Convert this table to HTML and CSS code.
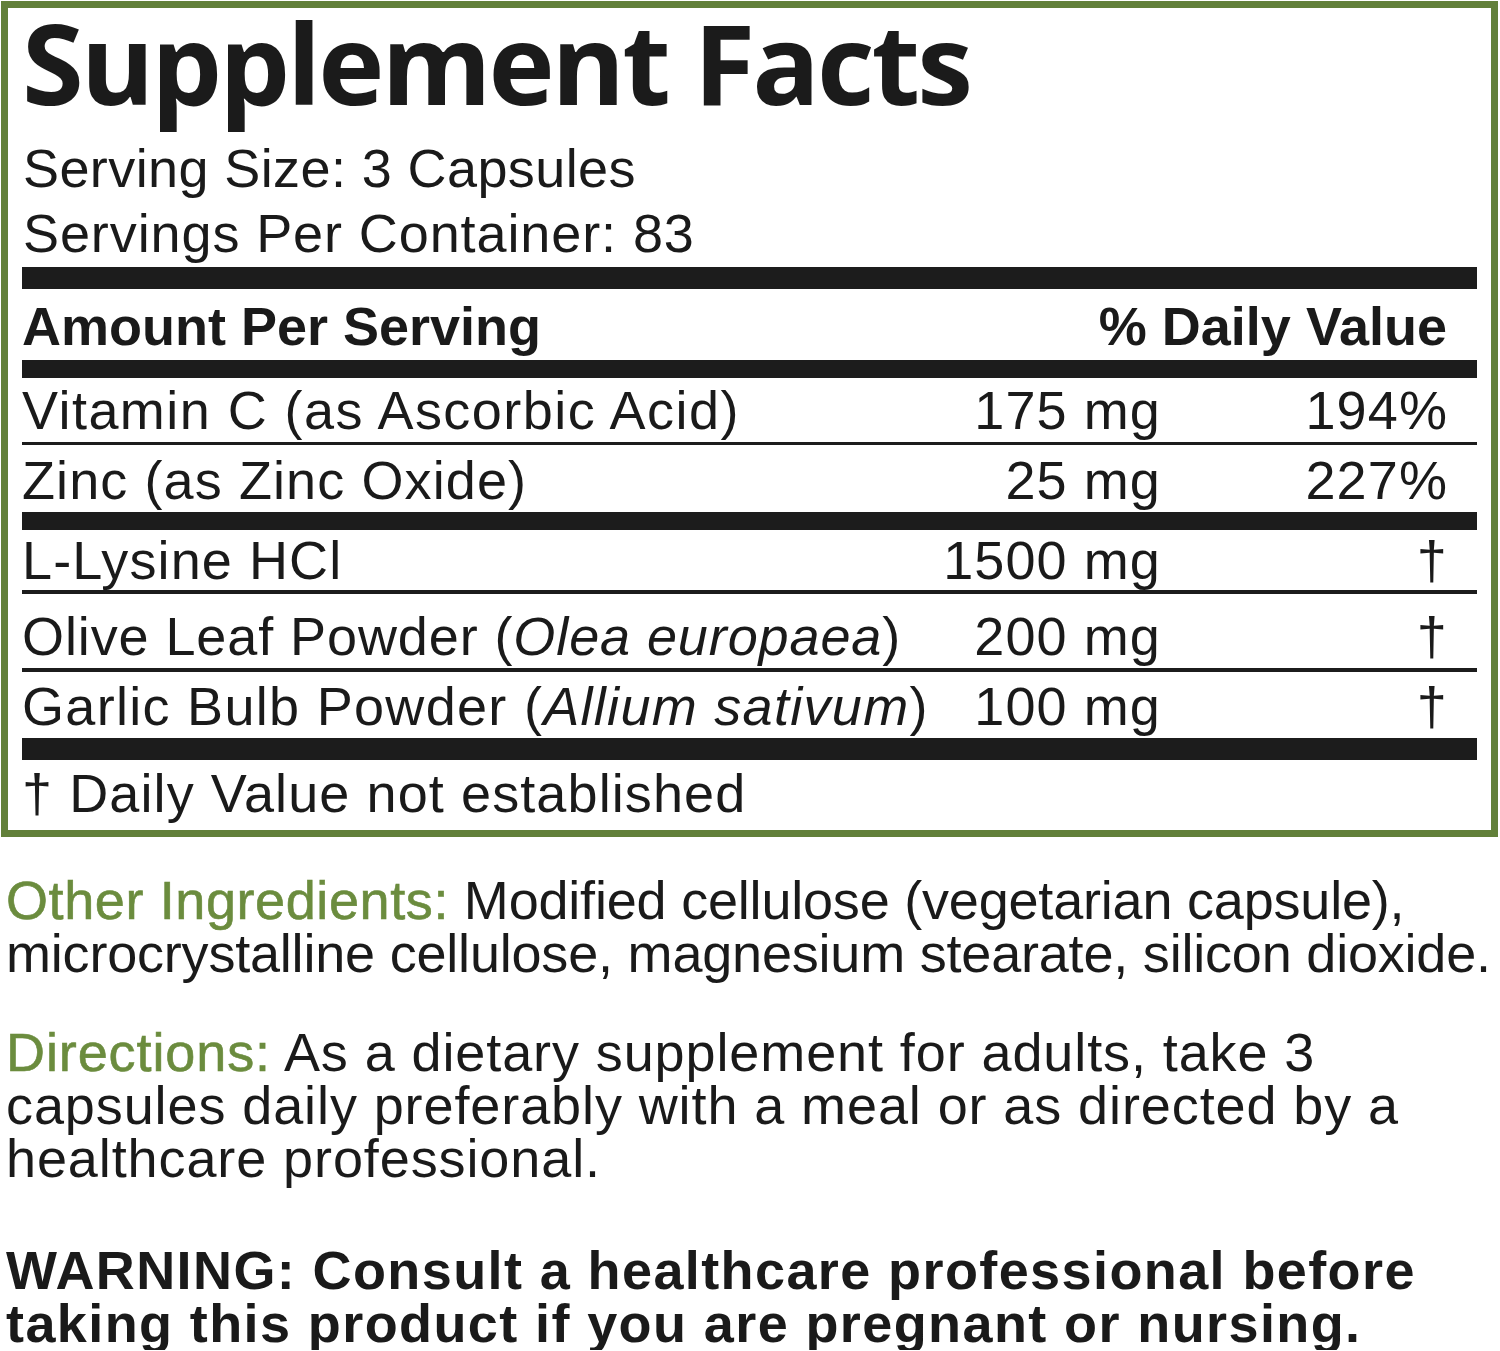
FILE: index.html
```html
<!DOCTYPE html>
<html lang="en">
<head>
<meta charset="utf-8">
<title>Supplement Facts</title>
<link rel="stylesheet" href="styles.css">
</head>
<body>
<section class="facts">
  <h1 class="title">Supplement Facts</h1>
  <div class="serving">
    <div class="line">Serving Size: 3 Capsules</div>
    <div class="line l-per">Servings Per Container: 83</div>
  </div>
  <div class="bar bar-22 gap-top"></div>
  <div class="head-row">
    <span>Amount Per Serving</span>
    <span class="dv-head">% Daily Value</span>
  </div>
  <div class="bar bar-18"></div>
  <div class="row r-vit"><span class="name">Vitamin C (as Ascorbic Acid)</span><span class="amt">175 mg</span><span class="dv">194%</span></div>
  <div class="bar bar-3"></div>
  <div class="row r-zinc"><span class="name">Zinc (as Zinc Oxide)</span><span class="amt">25 mg</span><span class="dv">227%</span></div>
  <div class="bar bar-18"></div>
  <div class="row r-lys"><span class="name">L-Lysine HCl</span><span class="amt">1500 mg</span><span class="dv">†</span></div>
  <div class="bar bar-4"></div>
  <div class="row r-olive"><span class="name">Olive Leaf Powder (<i>Olea europaea</i>)</span><span class="amt">200 mg</span><span class="dv">†</span></div>
  <div class="bar bar-4"></div>
  <div class="row r-garlic"><span class="name">Garlic Bulb Powder (<i>Allium sativum</i>)</span><span class="amt">100 mg</span><span class="dv">†</span></div>
  <div class="bar bar-22"></div>
  <div class="foot">† Daily Value not established</div>
</section>

<p class="para p-other"><span class="green">Other Ingredients:</span> Modified cellulose (vegetarian capsule),<br>microcrystalline cellulose, magnesium stearate, silicon dioxide.</p>
<p class="para p-dir"><span class="green">Directions:</span> As a dietary supplement for adults, take 3<br>capsules daily preferably with a meal or as directed by a<br>healthcare professional.</p>
<p class="para p-warn">WARNING: Consult a healthcare professional before<br>taking this product if you are pregnant or nursing.</p>
</body>
</html>
```

FILE: styles.css
```css
html, body {
  margin: 0;
  padding: 0;
  background: #ffffff;
}

body {
  font-family: "Liberation Sans", Arial, Helvetica, sans-serif;
  color: #1a1a1a;
  font-size: 54px;
  overflow: hidden;
}

.facts {
  margin: 1px 2px 0 1px;
  border: 7px solid #62803a;
  padding: 0 14px;
}

.title {
  margin: -2px 0 0 0;
  font-family: "Open Sans", "Noto Sans", sans-serif;
  font-weight: 700;
  font-size: 112px;
  line-height: 112px;
  letter-spacing: -3px;
  color: #1b1b1b;
  white-space: nowrap;
}

.serving {
  margin-top: 18px;
  letter-spacing: 0.4px;
}

.serving .line {
  line-height: 65px;
  padding-left: 1px;
}

.serving .l-per {
  letter-spacing: 0.9px;
}

.bar {
  background: #1c1c1c;
}

.bar-22 { height: 22px; }
.bar-18 { height: 18px; }
.bar-4 { height: 4px; }
.bar-3 { height: 3px; }
.gap-top { margin-top: 1px; }

.head-row {
  display: flex;
  justify-content: space-between;
  font-weight: 700;
  line-height: 67px;
  padding: 4px 30px 0 0;
}

.row {
  display: grid;
  grid-template-columns: 1fr auto 317px;
  line-height: 64px;
  letter-spacing: 1.1px;
}

.row .name {
  white-space: nowrap;
}

.r-vit .name { letter-spacing: 1.45px; }
.r-olive .name { letter-spacing: 0.9px; }
.r-garlic .name { letter-spacing: 1.3px; }

.row .amt {
  text-align: right;
  white-space: nowrap;
  margin-right: -1px;
}

.row .dv {
  text-align: right;
  padding-right: 29px;
}

.r-vit { padding-top: 0; }
.r-zinc { padding-top: 3px; }
.r-lys { line-height: 60px; }
.r-olive { padding-top: 10px; }
.r-garlic { padding-top: 2px; }

.foot {
  line-height: 66px;
  padding-bottom: 4px;
  letter-spacing: 1.1px;
}

.para {
  margin: 0;
  padding-left: 6px;
  line-height: 53px;
  white-space: nowrap;
}

.p-other {
  margin-top: 37px;
  letter-spacing: -0.2px;
}

.p-dir {
  margin-top: 46px;
  letter-spacing: 0.9px;
}

.p-warn {
  margin-top: 59px;
  font-weight: 700;
  letter-spacing: 1.4px;
}

.green {
  color: #6b8c3e;
  -webkit-text-stroke: 0.6px #6b8c3e;
}

.p-other .green {
  letter-spacing: 0.6px;
}
```
